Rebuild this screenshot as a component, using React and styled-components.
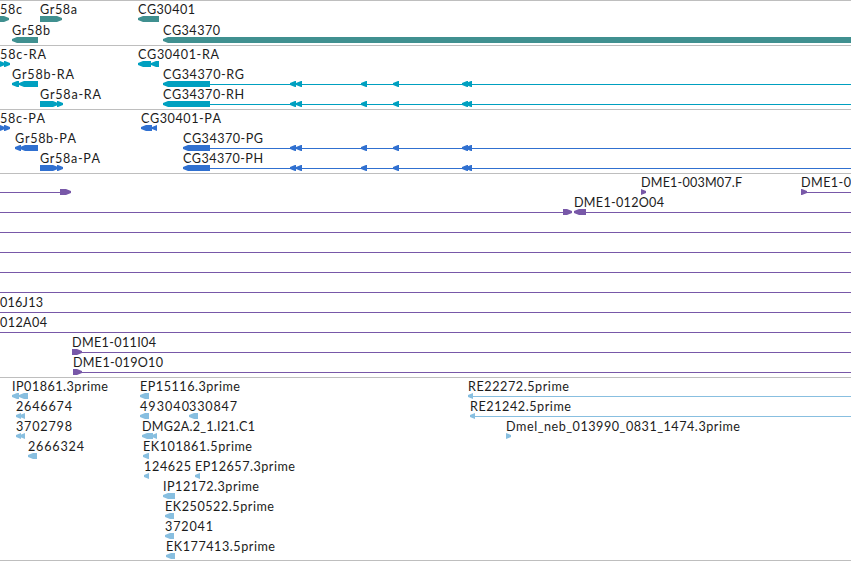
import styled, { createGlobalStyle } from "styled-components";

const GlobalStyle = createGlobalStyle`
  body {
    margin: 0;
    background: #fff;
    overflow: hidden;
  }
`;

const Viewer = styled.main`
  display: flex;
  flex-direction: column;
  width: 851px;
  height: 561px;
  box-sizing: border-box;
  border-top: 1px solid #bebebe;
  background: #fff;
`;

const Track = styled.section`
  display: flex;
  flex-direction: column;
  flex: none;
  padding: ${(props) => props.$padding || "1px 0 2px"};
  border-bottom: 1px solid #bebebe;
  color: ${(props) => props.$color};
`;

const Lane = styled.svg`
  display: block;
  flex: none;
  width: 851px;
  height: ${(props) => props.$height}px;
  overflow: visible;
`;

const Label = styled.text`
  font-family: Lato, "DejaVu Sans", sans-serif;
  font-size: 12.6px;
  font-kerning: none;
  fill: #1c1c1c;
`;

const Arrow = styled.polygon`
  fill: currentColor;
`;

const Line = styled.rect`
  fill: currentColor;
`;

// labels: [x, text, width], arrows: [start, end, direction], lines: [start, end]
const L = "left";
const R = "right";

const introns = [
  [290, 296, L],
  [296, 302, L],
  [361, 367, L],
  [393, 399, L],
  [462, 468, L],
  [466, 472, L],
];

const full = { lines: [[0, 851]] };

const tracks = [
  {
    name: "genes",
    color: "#409090",
    laneHeight: 21,
    padding: "0 0 2px",
    lanes: [
      {
        labels: [
          [0, "58c", 22],
          [40, "Gr58a", 37],
          [138, "CG30401", 57],
        ],
        arrows: [
          [0, 9, R],
          [40, 62, R],
          [138, 159, L],
        ],
      },
      {
        labels: [
          [12, "Gr58b", 38],
          [163, "CG34370", 57],
        ],
        arrows: [
          [12, 38, L],
          [163, 856, L],
        ],
      },
    ],
  },
  {
    name: "transcripts",
    color: "#00a0c0",
    lanes: [
      {
        labels: [
          [0, "58c-RA", 46],
          [138, "CG30401-RA", 81],
        ],
        arrows: [
          [-2, 5, R],
          [4, 10, R],
          [138, 151, L],
          [151, 159, L],
        ],
      },
      {
        labels: [
          [12, "Gr58b-RA", 62],
          [163, "CG34370-RG", 81],
        ],
        arrows: [
          [12, 19, L],
          [19, 38, L],
          [163, 210, L],
          ...introns,
        ],
        lines: [[210, 851]],
      },
      {
        labels: [
          [40, "Gr58a-RA", 61],
          [163, "CG34370-RH", 81],
        ],
        arrows: [
          [40, 58, R],
          [57, 63, R],
          [163, 210, L],
          ...introns,
        ],
        lines: [[210, 851]],
      },
    ],
  },
  {
    name: "proteins",
    color: "#3070d0",
    lanes: [
      {
        labels: [
          [0, "58c-PA", 45],
          [141, "CG30401-PA", 80],
        ],
        arrows: [
          [-2, 5, R],
          [4, 10, R],
          [141, 152, L],
          [152, 157, L],
        ],
      },
      {
        labels: [
          [15, "Gr58b-PA", 61],
          [183, "CG34370-PG", 80],
        ],
        arrows: [
          [15, 21, L],
          [20, 38, L],
          [183, 210, L],
          ...introns,
        ],
        lines: [[210, 851]],
      },
      {
        labels: [
          [40, "Gr58a-PA", 60],
          [183, "CG34370-PH", 80],
        ],
        arrows: [
          [40, 58, R],
          [57, 63, R],
          [183, 210, L],
          ...introns,
        ],
        lines: [[210, 851]],
      },
    ],
  },
  {
    name: "bacs",
    color: "#7858a8",
    lanes: [
      {
        labels: [
          [641, "DME1-003M07.F", 101],
          [801, "DME1-0", 50],
        ],
        arrows: [
          [60, 71, R],
          [641, 646, R],
          [801, 807, R],
        ],
        lines: [
          [0, 60],
          [804, 851],
        ],
      },
      {
        labels: [[574, "DME1-012O04", 90]],
        arrows: [
          [563, 572, R],
          [574, 586, L],
        ],
        lines: [
          [0, 563],
          [586, 851],
        ],
      },
      full,
      full,
      full,
      full,
      { ...full, labels: [[0, "016J13", 43]] },
      { ...full, labels: [[0, "012A04", 47]] },
      {
        labels: [[72, "DME1-011I04", 84]],
        arrows: [[72, 82, R]],
        lines: [[78, 851]],
      },
      {
        labels: [[73, "DME1-019O10", 90]],
        arrows: [[73, 82, R]],
        lines: [[78, 851]],
      },
    ],
  },
  {
    name: "ests",
    color: "#88bfe0",
    padding: "1px 0",
    lanes: [
      {
        labels: [
          [12, "IP01861.3prime", 96],
          [140, "EP15116.3prime", 100],
          [468, "RE22272.5prime", 101],
        ],
        arrows: [
          [12, 19, L],
          [19, 28, L],
          [140, 149, L],
          [468, 473, L],
        ],
        lines: [[473, 851]],
      },
      {
        labels: [
          [16, "2646674", 56],
          [140, "493040", 49],
          [189, "330847", 48],
          [470, "RE21242.5prime", 101],
        ],
        arrows: [
          [16, 21, L],
          [20, 25, L],
          [140, 149, L],
          [189, 198, L],
          [470, 475, L],
        ],
        lines: [[475, 851]],
      },
      {
        labels: [
          [16, "3702798", 56],
          [142, "DMG2A.2_1.I21.C1", 113],
          [506, "Dmel_neb_013990_0831_1474.3prime", 234],
        ],
        arrows: [
          [16, 21, L],
          [20, 25, L],
          [142, 153, L],
          [152, 157, L],
          [506, 511, R],
        ],
      },
      {
        labels: [
          [28, "2666324", 56],
          [143, "EK101861.5prime", 109],
        ],
        arrows: [
          [28, 37, L],
          [143, 149, L],
        ],
      },
      {
        labels: [
          [144, "124625", 47],
          [195, "EP12657.3prime", 100],
        ],
        arrows: [
          [144, 149, L],
          [195, 200, L],
        ],
      },
      { labels: [[163, "IP12172.3prime", 96]], arrows: [[163, 175, L]] },
      { labels: [[165, "EK250522.5prime", 109]], arrows: [[165, 174, L]] },
      { labels: [[165, "372041", 48]], arrows: [[165, 174, L]] },
      { labels: [[166, "EK177413.5prime", 109]], arrows: [[166, 175, L]] },
    ],
  },
];

// the tip is slightly blunt so short exons still read as arrows
function arrowPoints(start, end, direction, top) {
  const head = Math.min(5, end - start);
  const [tip, tail, step] = direction === L ? [start, end, 1] : [end, start, -1];
  return [
    [tip, top + 2],
    [tip + step * head, top],
    [tail, top],
    [tail, top + 6],
    [tip + step * head, top + 6],
    [tip, top + 4],
  ].join(" ");
}

function FeatureLane({ lane, height }) {
  const top = height - 6;
  return (
    <Lane $height={height}>
      {lane.lines?.map(([start, end]) => (
        <Line key={start} x={start} y={top + 3} width={end - start} height={1} />
      ))}
      {lane.arrows?.map(([start, end, direction]) => (
        <Arrow key={start} points={arrowPoints(start, end, direction, top)} />
      ))}
      {lane.labels?.map(([x, text, width]) => (
        <Label key={text} x={x} y={top - 2.5} textLength={width}>
          {text}
        </Label>
      ))}
    </Lane>
  );
}

export default function App() {
  return (
    <>
      <GlobalStyle />
      <Viewer>
        {tracks.map((track) => (
          <Track key={track.name} $color={track.color} $padding={track.padding}>
            {track.lanes.map((lane, i) => (
              <FeatureLane key={i} lane={lane} height={track.laneHeight || 20} />
            ))}
          </Track>
        ))}
      </Viewer>
    </>
  );
}
